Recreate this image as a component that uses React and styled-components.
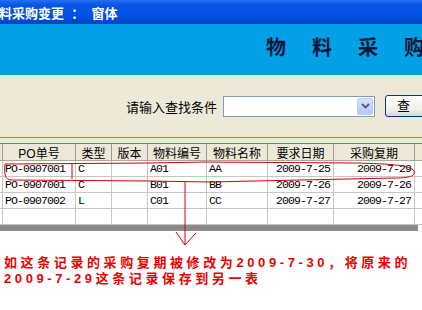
import styled, { createGlobalStyle } from 'styled-components';

const GlobalStyle = createGlobalStyle`
  html, body {
    margin: 0;
    padding: 0;
    background: #ffffff;
    overflow: hidden;
  }
  body {
    font-family: "Liberation Sans", "Noto Sans CJK SC", sans-serif;
  }
`;

const CJK = `"Liberation Sans", "Noto Sans CJK SC", sans-serif`;

const columns = [
  { key: 'po', title: 'PO单号', width: 73 },
  { key: 'type', title: '类型', width: 36 },
  { key: 'ver', title: '版本', width: 36 },
  { key: 'code', title: '物料编号', width: 59 },
  { key: 'name', title: '物料名称', width: 61 },
  { key: 'need', title: '要求日期', width: 66, right: true },
  { key: 'buy', title: '采购复期', width: 81, right: true },
];

const rows = [
  { po: 'PO-0907001', type: 'C', ver: '', code: 'A01', name: 'AA', need: '2009-7-25', buy: '2009-7-29' },
  { po: 'PO-0907001', type: 'C', ver: '', code: 'B01', name: 'BB', need: '2009-7-26', buy: '2009-7-26' },
  { po: 'PO-0907002', type: 'L', ver: '', code: 'C01', name: 'CC', need: '2009-7-27', buy: '2009-7-27' },
  {},
];

const gridCols = `3px ${columns.map((c) => c.width + 'px').join(' ')} 1fr`;

const App = () => {
  return (
    <S.Window>
      <GlobalStyle />
      <S.TitleBar>
        <S.Caption>料采购变更  ：  窗体</S.Caption>
      </S.TitleBar>
      <S.Banner>
        <S.Heading>物料采购变更</S.Heading>
      </S.Banner>
      <S.SearchPanel>
        <S.Label>请输入查找条件</S.Label>
        <S.Combo>
          <S.DropButton>
            <svg width="9" height="6" viewBox="0 0 9 6">
              <path d="M1 1 L4.5 4.5 L8 1" fill="none" stroke="#4d6185" strokeWidth="1.8" />
            </svg>
          </S.DropButton>
        </S.Combo>
        <S.Button>查</S.Button>
      </S.SearchPanel>
      <S.Spacer />
      <S.Grid>
        <S.HeaderRow>
          <S.HeadCell />
          {columns.map((c) => (
            <S.HeadCell key={c.key}>{c.title}</S.HeadCell>
          ))}
          <S.HeadCell $blank />
        </S.HeaderRow>
        {rows.map((r, i) => (
          <S.Row key={i}>
            <S.Cell />
            {columns.map((c) => (
              <S.Cell key={c.key} $right={c.right}>
                {r[c.key]}
              </S.Cell>
            ))}
            <S.Cell $blank />
          </S.Row>
        ))}
        <S.ScrollBar />
      </S.Grid>
      <S.Notes>
        如这条记录的采购复期被修改为2009-7-30，将原来的
        <br />
        2009-7-29这条记录保存到另一表
      </S.Notes>
      <S.Markup width="422" height="310" viewBox="0 0 422 310">
        <path
          d="M72 179 L72 163 M5 164 L150 163 L205 162 L355 163 C392 164 410 165 414 171 C416 177 406 178 394 178 L300 180 L210 182 L150 181 L12 180 C5 180 4 175 5 164"
          fill="none"
          stroke="#d40000"
          strokeWidth="1"
        />
        <path d="M185 182 L185 245 M176 232 L185 245 L196 233" fill="none" stroke="#d40000" strokeWidth="1" />
      </S.Markup>
    </S.Window>
  );
};

const S = {
  Window: styled.div`
    position: relative;
    width: 422px;
    height: 310px;
    overflow: hidden;
    background: #ffffff;
  `,
  TitleBar: styled.div`
    display: flex;
    align-items: center;
    height: 24px;
    background: linear-gradient(#2a6ff0 0%, #0656e6 20%, #0350e0 70%, #0242c4 100%);
  `,
  Caption: styled.span`
    margin-left: -1px;
    color: #ffffff;
    font: bold 13px ${CJK};
    white-space: pre;
  `,
  Banner: styled.div`
    height: 51px;
    background: #03a0e6;
    padding-left: 266px;
    box-sizing: border-box;
    padding-top: 12px;
  `,
  Heading: styled.div`
    font: bold 20px/24px ${CJK};
    color: #10163a;
    letter-spacing: 26px;
    white-space: nowrap;
  `,
  SearchPanel: styled.div`
    display: flex;
    align-items: center;
    height: 62px;
    padding-left: 126px;
    background: #ece9d8;
    border-bottom: 1px solid #3c9ede;
  `,
  Label: styled.span`
    font: 13px ${CJK};
    color: #000000;
    white-space: nowrap;
  `,
  Combo: styled.div`
    display: flex;
    justify-content: flex-end;
    align-items: center;
    box-sizing: border-box;
    width: 152px;
    height: 21px;
    margin-left: 6px;
    padding-right: 1px;
    background: #ffffff;
    border: 1px solid #7f9db9;
    flex-shrink: 0;
  `,
  DropButton: styled.div`
    display: flex;
    align-items: center;
    justify-content: center;
    width: 16px;
    height: 17px;
    border-radius: 2px;
    background: linear-gradient(#d6e2fc, #b4c8f5);
    border: 1px solid #b9cdf6;
    box-sizing: border-box;
  `,
  Button: styled.div`
    flex-shrink: 0;
    box-sizing: border-box;
    width: 70px;
    height: 22px;
    margin-left: 10px;
    padding-left: 11px;
    border: 1px solid #003c74;
    border-radius: 3px;
    background: linear-gradient(#ffffff, #f0efe8 70%, #dcd9cc);
    font: 13px/20px ${CJK};
    color: #000000;
  `,
  Spacer: styled.div`
    height: 5px;
    background: #ece9d8;
  `,
  Grid: styled.div`
    display: flex;
    flex-direction: column;
    background: #ffffff;
  `,
  HeaderRow: styled.div`
    display: grid;
    grid-template-columns: ${gridCols};
    height: 18px;
    border-top: 1px solid #7a7a7a;
    box-sizing: border-box;
    background: #ece9d8;
  `,
  HeadCell: styled.div`
    display: flex;
    align-items: center;
    justify-content: center;
    border-right: ${(p) => (p.$blank ? 'none' : '1px solid #9c9a90')};
    border-bottom: 1px solid #aca899;
    font: 12px ${CJK};
    color: #000000;
    white-space: nowrap;
    overflow: hidden;
  `,
  Row: styled.div`
    display: grid;
    grid-template-columns: ${gridCols};
    height: 16px;
  `,
  Cell: styled.div`
    display: flex;
    align-items: center;
    justify-content: ${(p) => (p.$right ? 'flex-end' : 'flex-start')};
    padding: 0 ${(p) => (p.$right ? '3px' : '0')} 0 ${(p) => (p.$right ? '0' : '2px')};
    border-right: ${(p) => (p.$blank ? 'none' : '1px solid #c6c6c6')};
    border-bottom: 1px solid #c6c6c6;
    font: 11.5px "Liberation Mono", monospace;
    letter-spacing: -0.9px;
    color: #000000;
    white-space: nowrap;
    overflow: hidden;
  `,
  ScrollBar: styled.div`
    width: 418px;
    height: 6px;
    background: #8a8a8a;
  `,
  Notes: styled.div`
    padding: 24px 0 0 4px;
    font: bold 13px/16px ${CJK};
    letter-spacing: 3.6px;
    color: #ee0000;
    white-space: nowrap;
  `,
  Markup: styled.svg`
    position: absolute;
    left: 0;
    top: 0;
    pointer-events: none;
  `,
};

export default App;
